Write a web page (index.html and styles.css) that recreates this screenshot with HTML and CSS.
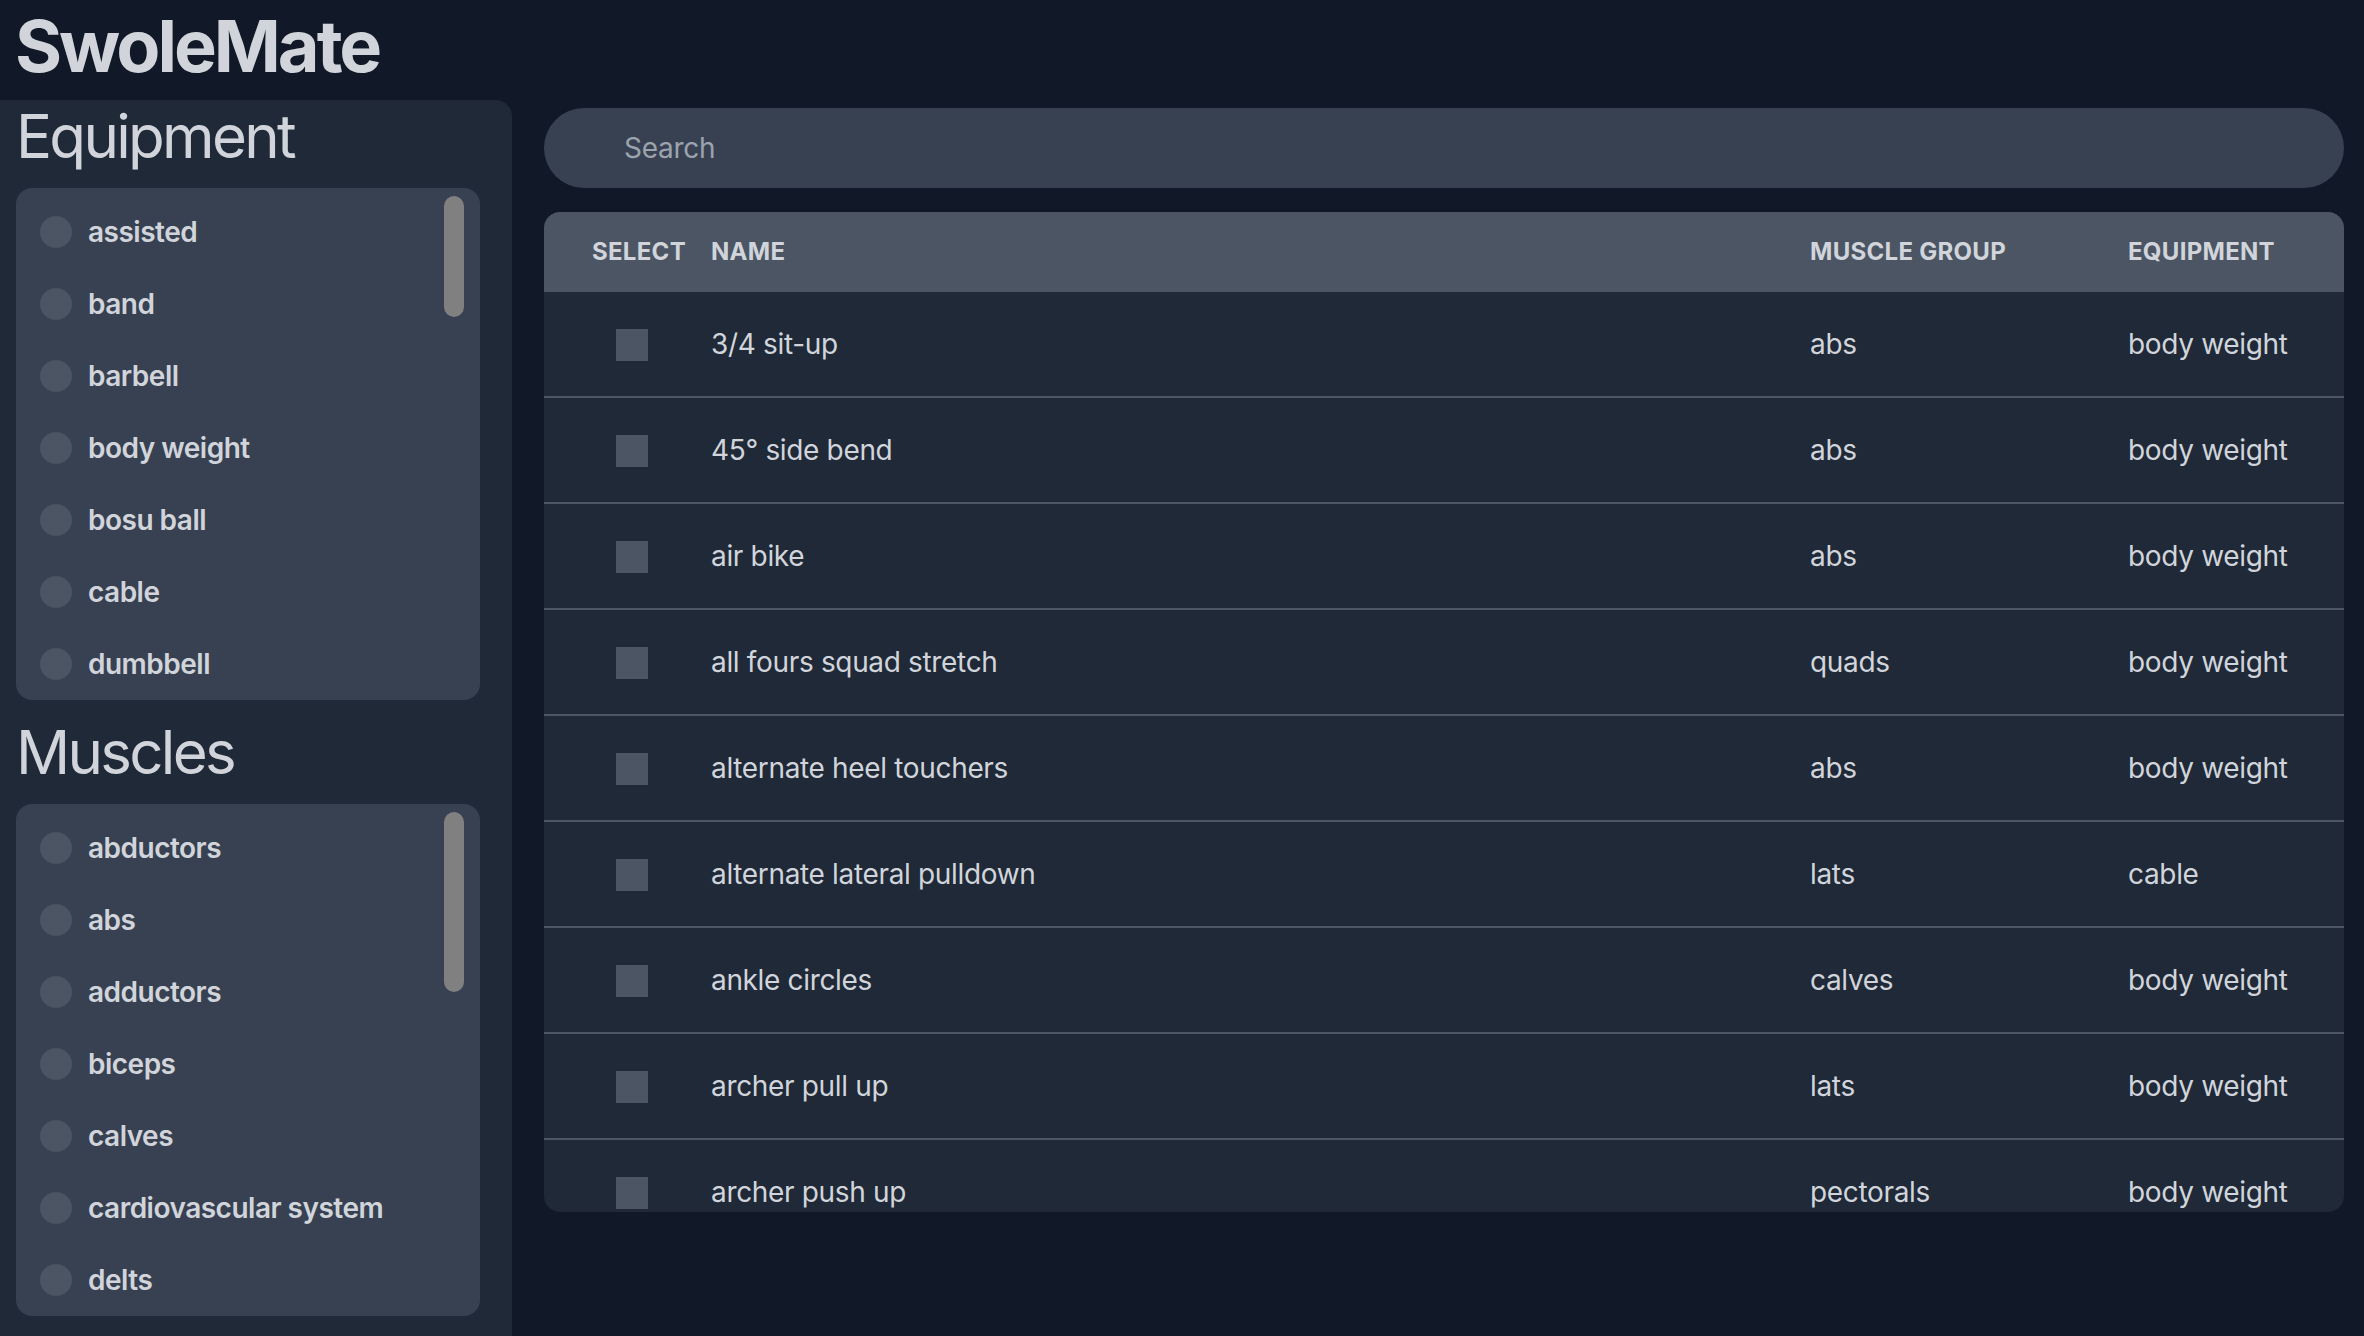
FILE: index.html
```html
<!DOCTYPE html>
<html lang="en">
<head>
<meta charset="utf-8">
<title>SwoleMate</title>
<link rel="stylesheet" href="styles.css">
</head>
<body>
<header class="app-header">
  <h1 class="brand">SwoleMate</h1>
</header>
<div class="layout">
  <aside class="sidebar">
    <section class="filter-group">
      <h2 class="filter-title">Equipment</h2>
      <div class="filter-box">
        <ul class="filter-list">
          <li class="filter-item"><span class="radio"></span><span class="filter-label">assisted</span></li>
          <li class="filter-item"><span class="radio"></span><span class="filter-label">band</span></li>
          <li class="filter-item"><span class="radio"></span><span class="filter-label">barbell</span></li>
          <li class="filter-item"><span class="radio"></span><span class="filter-label">body weight</span></li>
          <li class="filter-item"><span class="radio"></span><span class="filter-label">bosu ball</span></li>
          <li class="filter-item"><span class="radio"></span><span class="filter-label">cable</span></li>
          <li class="filter-item"><span class="radio"></span><span class="filter-label">dumbbell</span></li>
          <li class="filter-item"><span class="radio"></span><span class="filter-label">elliptical machine</span></li>
          <li class="filter-item"><span class="radio"></span><span class="filter-label">ez barbell</span></li>
          <li class="filter-item"><span class="radio"></span><span class="filter-label">hammer</span></li>
          <li class="filter-item"><span class="radio"></span><span class="filter-label">kettlebell</span></li>
          <li class="filter-item"><span class="radio"></span><span class="filter-label">leverage machine</span></li>
          <li class="filter-item"><span class="radio"></span><span class="filter-label">medicine ball</span></li>
          <li class="filter-item"><span class="radio"></span><span class="filter-label">olympic barbell</span></li>
          <li class="filter-item"><span class="radio"></span><span class="filter-label">resistance band</span></li>
          <li class="filter-item"><span class="radio"></span><span class="filter-label">roller</span></li>
          <li class="filter-item"><span class="radio"></span><span class="filter-label">rope</span></li>
          <li class="filter-item"><span class="radio"></span><span class="filter-label">skierg machine</span></li>
          <li class="filter-item"><span class="radio"></span><span class="filter-label">sled machine</span></li>
          <li class="filter-item"><span class="radio"></span><span class="filter-label">smith machine</span></li>
          <li class="filter-item"><span class="radio"></span><span class="filter-label">stability ball</span></li>
          <li class="filter-item"><span class="radio"></span><span class="filter-label">stationary bike</span></li>
          <li class="filter-item"><span class="radio"></span><span class="filter-label">stepmill machine</span></li>
          <li class="filter-item"><span class="radio"></span><span class="filter-label">tire</span></li>
          <li class="filter-item"><span class="radio"></span><span class="filter-label">trap bar</span></li>
          <li class="filter-item"><span class="radio"></span><span class="filter-label">upper body ergometer</span></li>
          <li class="filter-item"><span class="radio"></span><span class="filter-label">weighted</span></li>
          <li class="filter-item"><span class="radio"></span><span class="filter-label">wheel roller</span></li>
        </ul>
        <div class="scroll-thumb" style="height: 121px"></div>
      </div>
    </section>
    <section class="filter-group">
      <h2 class="filter-title">Muscles</h2>
      <div class="filter-box">
        <ul class="filter-list">
          <li class="filter-item"><span class="radio"></span><span class="filter-label">abductors</span></li>
          <li class="filter-item"><span class="radio"></span><span class="filter-label">abs</span></li>
          <li class="filter-item"><span class="radio"></span><span class="filter-label">adductors</span></li>
          <li class="filter-item"><span class="radio"></span><span class="filter-label">biceps</span></li>
          <li class="filter-item"><span class="radio"></span><span class="filter-label">calves</span></li>
          <li class="filter-item"><span class="radio"></span><span class="filter-label">cardiovascular system</span></li>
          <li class="filter-item"><span class="radio"></span><span class="filter-label">delts</span></li>
          <li class="filter-item"><span class="radio"></span><span class="filter-label">forearms</span></li>
          <li class="filter-item"><span class="radio"></span><span class="filter-label">glutes</span></li>
          <li class="filter-item"><span class="radio"></span><span class="filter-label">hamstrings</span></li>
          <li class="filter-item"><span class="radio"></span><span class="filter-label">lats</span></li>
          <li class="filter-item"><span class="radio"></span><span class="filter-label">levator scapulae</span></li>
          <li class="filter-item"><span class="radio"></span><span class="filter-label">pectorals</span></li>
          <li class="filter-item"><span class="radio"></span><span class="filter-label">quads</span></li>
          <li class="filter-item"><span class="radio"></span><span class="filter-label">serratus anterior</span></li>
          <li class="filter-item"><span class="radio"></span><span class="filter-label">spine</span></li>
          <li class="filter-item"><span class="radio"></span><span class="filter-label">traps</span></li>
          <li class="filter-item"><span class="radio"></span><span class="filter-label">triceps</span></li>
          <li class="filter-item"><span class="radio"></span><span class="filter-label">upper back</span></li>
        </ul>
        <div class="scroll-thumb" style="height: 180px"></div>
      </div>
    </section>
  </aside>
  <main class="content">
    <input class="search" type="text" placeholder="Search">
    <div class="table-wrap">
      <table class="exercise-table">
        <colgroup>
          <col class="col-select">
          <col class="col-name">
          <col class="col-muscle">
          <col class="col-equip">
        </colgroup>
        <thead>
          <tr>
            <th class="cell-select">Select</th>
            <th>Name</th>
            <th>Muscle Group</th>
            <th>Equipment</th>
          </tr>
        </thead>
        <tbody>
          <tr><td class="cell-select"><span class="checkbox"></span></td><td>3/4 sit-up</td><td>abs</td><td>body weight</td></tr>
          <tr><td class="cell-select"><span class="checkbox"></span></td><td>45° side bend</td><td>abs</td><td>body weight</td></tr>
          <tr><td class="cell-select"><span class="checkbox"></span></td><td>air bike</td><td>abs</td><td>body weight</td></tr>
          <tr><td class="cell-select"><span class="checkbox"></span></td><td>all fours squad stretch</td><td>quads</td><td>body weight</td></tr>
          <tr><td class="cell-select"><span class="checkbox"></span></td><td>alternate heel touchers</td><td>abs</td><td>body weight</td></tr>
          <tr><td class="cell-select"><span class="checkbox"></span></td><td>alternate lateral pulldown</td><td>lats</td><td>cable</td></tr>
          <tr><td class="cell-select"><span class="checkbox"></span></td><td>ankle circles</td><td>calves</td><td>body weight</td></tr>
          <tr><td class="cell-select"><span class="checkbox"></span></td><td>archer pull up</td><td>lats</td><td>body weight</td></tr>
          <tr><td class="cell-select"><span class="checkbox"></span></td><td>archer push up</td><td>pectorals</td><td>body weight</td></tr>
        </tbody>
      </table>
    </div>
  </main>
</div>
</body>
</html>
```

FILE: styles.css
```css
* {
  box-sizing: border-box;
}

html, body {
  margin: 0;
  padding: 0;
  height: 100%;
  overflow: hidden;
}

body {
  background: #111827;
  color: #d1d5db;
  font-family: Inter, "Noto Sans", "Liberation Sans", sans-serif;
}

.app-header {
  height: 100px;
  padding: 6px 0 0 15px;
}

.brand {
  margin: 0;
  font-size: 72px;
  line-height: 80px;
  font-weight: 700;
  letter-spacing: -0.042em;
  color: #d1d5db;
}

.layout {
  display: flex;
  gap: 32px;
  padding-right: 20px;
  height: calc(100vh - 100px);
}

.sidebar {
  flex: 0 0 512px;
  background: #1f2937;
  border-radius: 0 16px 0 0;
  padding: 0 32px 0 16px;
}

.filter-group + .filter-group {
  margin-top: 16px;
}

.filter-title {
  margin: 0;
  font-size: 60px;
  line-height: 72px;
  font-weight: 400;
  letter-spacing: -0.045em;
  color: #d1d5db;
}

.filter-box {
  position: relative;
  margin-top: 16px;
  height: 512px;
  background: #374151;
  border-radius: 16px;
  overflow: hidden;
}

.filter-list {
  list-style: none;
  margin: 0;
  padding: 8px 0;
  height: 100%;
  overflow-y: auto;
  scrollbar-width: none;
}

.scroll-thumb {
  position: absolute;
  top: 8px;
  right: 16px;
  width: 20px;
  border-radius: 10px;
  background: #808080;
}

.filter-item {
  display: flex;
  align-items: center;
  gap: 16px;
  height: 72px;
  padding-left: 24px;
}

.radio {
  flex: 0 0 32px;
  width: 32px;
  height: 32px;
  border-radius: 50%;
  background: #4b5563;
}

.filter-label {
  font-size: 28px;
  line-height: 40px;
  font-weight: 600;
  letter-spacing: -0.018em;
  color: #d1d5db;
  white-space: nowrap;
}

.content {
  flex: 1 1 auto;
  min-width: 0;
  padding-top: 8px;
}

.search {
  display: block;
  width: 100%;
  height: 80px;
  border: none;
  outline: none;
  border-radius: 9999px;
  background: #374151;
  padding: 0 24px 0 80px;
  font-family: Inter, "Noto Sans", "Liberation Sans", sans-serif;
  font-size: 28px;
  letter-spacing: -0.01em;
  color: #d1d5db;
}

.search::placeholder {
  color: #9ca3af;
}

.table-wrap {
  margin-top: 24px;
  height: 1000px;
  overflow: hidden;
  border-radius: 16px;
  background: #1f2937;
}

.exercise-table {
  width: 100%;
  table-layout: fixed;
  border-collapse: separate;
  border-spacing: 0;
}

.col-select { width: 143px; }
.col-name { width: 1099px; }
.col-muscle { width: 318px; }
.col-equip { width: 240px; }

.exercise-table th {
  height: 80px;
  padding: 0 24px;
  background: #4b5563;
  color: #d1d5db;
  font-size: 24px;
  line-height: 32px;
  font-weight: 700;
  letter-spacing: 0.012em;
  text-transform: uppercase;
  text-align: left;
  white-space: nowrap;
}

.exercise-table td {
  padding: 32px 24px;
  font-size: 28px;
  line-height: 40px;
  font-weight: 400;
  letter-spacing: -0.012em;
  color: #d1d5db;
  border-bottom: 2px solid #4b5563;
  vertical-align: middle;
  white-space: nowrap;
}

.exercise-table .cell-select {
  padding-left: 48px;
}

.checkbox {
  display: block;
  width: 32px;
  height: 32px;
  margin: 2px 0 0 24px;
  background: #4b5563;
}
```
